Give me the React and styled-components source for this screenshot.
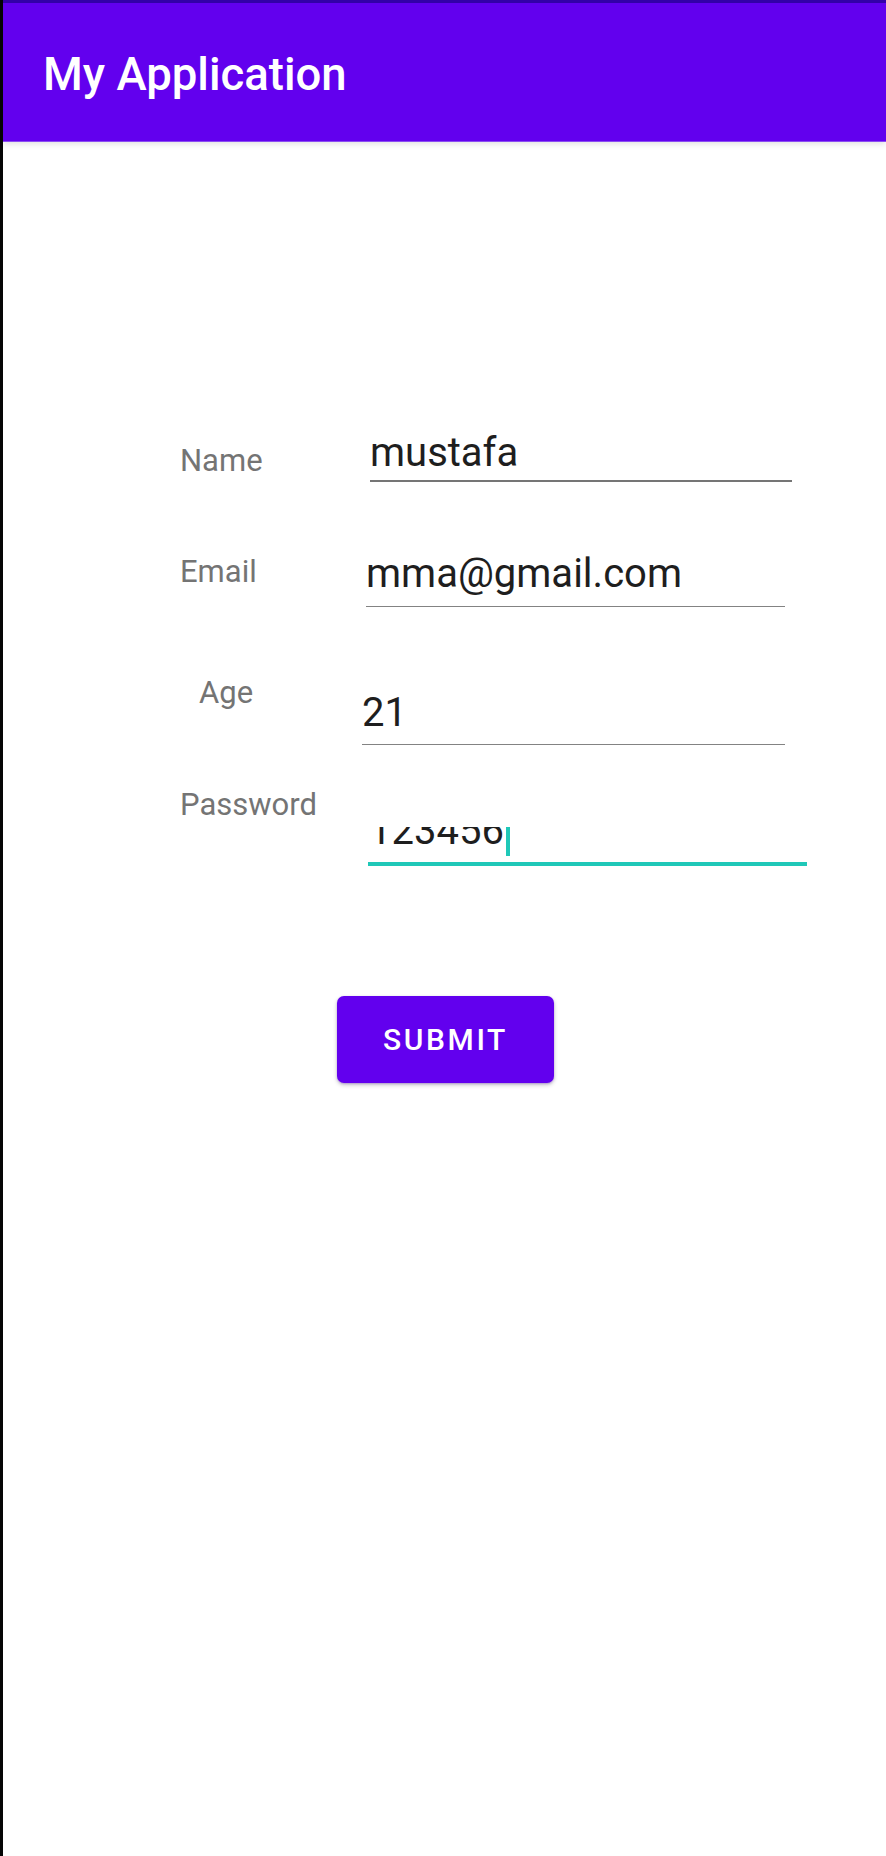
import styled, { createGlobalStyle } from "styled-components";

const GlobalStyle = createGlobalStyle`
  html, body {
    margin: 0;
    padding: 0;
    background: #ffffff;
  }
  body {
    font-family: Roboto, "Noto Sans", "Liberation Sans", sans-serif;
  }
`;

const Screen = styled.div`
  width: 886px;
  min-height: 1856px;
  box-sizing: border-box;
  border-left: 3px solid #050505;
  background: #ffffff;
  display: flex;
  flex-direction: column;
`;

const AppBar = styled.header`
  height: 142px;
  box-sizing: border-box;
  background: #6200ee;
  border-top: 3px solid #3300a8;
  border-bottom: 1px solid #8a4cf2;
  box-shadow: 0 2px 6px rgba(0, 0, 0, 0.12);
  padding: 49px 0 0 40px;
`;

const Title = styled.h1`
  margin: 0;
  color: #ffffff;
  font-family: Roboto, "Noto Sans", sans-serif;
  font-weight: 500;
  font-size: 45.5px;
  line-height: 45px;
`;

const Form = styled.div`
  display: flex;
  flex-direction: column;
  padding: 291px 0 0 177px;
`;

const Row = styled.div`
  display: flex;
  align-items: flex-start;
  margin-top: ${(p) => p.$gap || 0}px;
`;

const Label = styled.label`
  width: 182px;
  flex-shrink: 0;
  box-sizing: border-box;
  padding-left: ${(p) => p.$indent || 0}px;
  margin-top: ${(p) => p.$top || 0}px;
  color: #747474;
  font-size: 31px;
  line-height: 30px;
`;

const Field = styled.div`
  display: flex;
  flex-direction: column;
  width: ${(p) => p.$width}px;
  margin-left: ${(p) => p.$left}px;
  margin-top: ${(p) => p.$top || 0}px;
  padding-bottom: ${(p) => p.$pad || 0}px;
  border-bottom: ${(p) => p.$line || 1}px solid ${(p) => p.$color || "#838383"};
`;

const Value = styled.div`
  color: #1e1e1e;
  font-size: 40px;
  line-height: 40px;
  white-space: nowrap;
`;

const Clip = styled.div`
  height: ${(p) => p.$height}px;
  overflow: hidden;
`;

const ScrolledValue = styled(Value)`
  margin-top: -16px;
  padding-left: 1px;
`;

const Cursor = styled.span`
  display: inline-block;
  width: 4px;
  height: 30px;
  margin-left: 2px;
  vertical-align: -12px;
  background: #1fc8b8;
`;

const Actions = styled.div`
  display: flex;
  padding: 130px 0 0 334px;
`;

const SubmitButton = styled.button`
  width: 217px;
  height: 87px;
  border: none;
  border-radius: 7px;
  background: #6200ee;
  color: #ffffff;
  font-family: Roboto, "Noto Sans", sans-serif;
  font-weight: 500;
  font-size: 30px;
  letter-spacing: 2.6px;
  box-shadow: 0 2px 4px rgba(0, 0, 0, 0.22), 0 1px 2px rgba(98, 0, 238, 0.25);
  display: flex;
  align-items: center;
  justify-content: center;
  cursor: pointer;
`;

export default function App() {
  return (
    <>
      <GlobalStyle />
      <Screen>
        <AppBar>
          <Title>My Application</Title>
        </AppBar>
        <Form>
          <Row>
            <Label $top={13}>Name</Label>
            <Field $left={8} $width={422} $pad={7} $line={2} $color="#757575">
              <Value>mustafa</Value>
            </Field>
          </Row>
          <Row $gap={72}>
            <Label $top={3}>Email</Label>
            <Field $left={4} $width={419} $pad={12}>
              <Value>mma@gmail.com</Value>
            </Field>
          </Row>
          <Row $gap={71}>
            <Label $indent={19}>Age</Label>
            <Field $left={0} $top={15} $width={423} $pad={11}>
              <Value>21</Value>
            </Field>
          </Row>
          <Row $gap={45}>
            <Label>Password</Label>
            <Field $left={6} $top={37} $width={439} $line={4} $color="#1fc8b8">
              <Clip $height={35}>
                <ScrolledValue>
                  123456
                  <Cursor />
                </ScrolledValue>
              </Clip>
            </Field>
          </Row>
        </Form>
        <Actions>
          <SubmitButton>SUBMIT</SubmitButton>
        </Actions>
      </Screen>
    </>
  );
}
